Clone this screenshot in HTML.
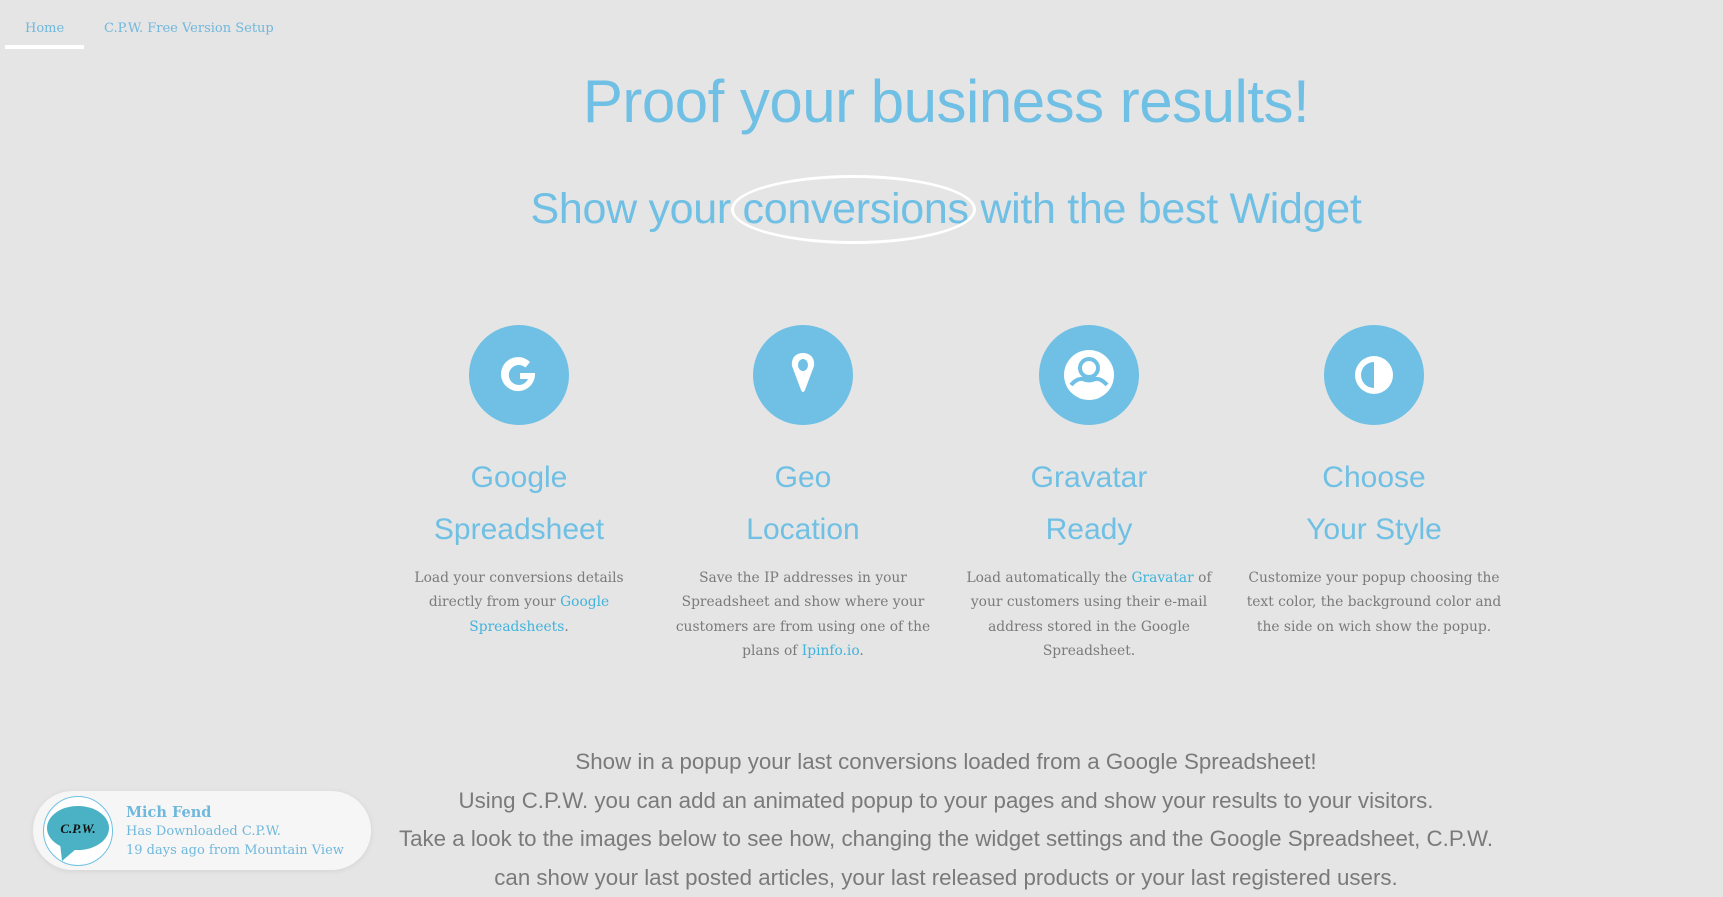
<!DOCTYPE html>
<html><head><meta charset="utf-8"><style>
*{margin:0;padding:0;box-sizing:border-box}
body{width:1723px;height:886px;overflow:hidden;background:#e5e5e5;position:relative;font-family:"Liberation Sans",sans-serif}
.nav{position:absolute;top:21px;font-family:"DejaVu Serif",serif;font-size:13px;color:#6fb8dd}
.ul{position:absolute;left:5px;top:45px;width:79px;height:4px;background:#fff}
h1{position:absolute;top:67px;left:0;width:1892px;text-align:center;font-weight:300;font-size:60px;color:#6fc0e4;white-space:nowrap;letter-spacing:-0.5px}
h2{position:absolute;top:185px;left:0;width:1892px;text-align:center;font-weight:300;font-size:43px;color:#6fc0e4;white-space:nowrap;letter-spacing:-0.3px}
.ell{position:absolute;left:731px;top:175px;width:245px;height:69px;border:3px solid #fff;border-radius:50%}
.col{position:absolute;top:325px;width:280px;text-align:center}
.ci{width:100px;height:100px;border-radius:50%;background:#6fc0e4;margin:0 auto;display:flex;align-items:center;justify-content:center}
.col h3{font-weight:400;font-size:30px;line-height:52px;color:#6fc0e4;margin-top:27px}
.col p{font-family:"DejaVu Serif",serif;font-size:13.8px;line-height:24.3px;color:#7a7a7a;margin-top:10px}
.col a{color:#3fb3dc;text-decoration:none}
.bot{position:absolute;top:743px;left:0;width:1892px;text-align:center;font-size:22.3px;line-height:38.5px;color:#7a7a7a;font-weight:300}
.pop{position:absolute;left:33px;top:791px;width:338px;height:79px;border-radius:40px;background:#f6f6f6;box-shadow:0 1px 6px rgba(0,0,0,.08)}
.av{position:absolute;left:43px;top:796px;width:70px;height:70px;border-radius:50%;border:1px solid #6fc0e4;background:#fff}
.pt{position:absolute;left:126px;font-family:"DejaVu Serif",serif;color:#6fb8dd;font-size:13px;white-space:nowrap}
</style></head><body>
<div class="nav" style="left:25px">Home</div>
<div class="nav" style="left:104px">C.P.W. Free Version Setup</div>
<div class="ul"></div>
<h1>Proof your business results!</h1>
<h2>Show your conversions with the best Widget</h2>
<div class="ell"></div>

<div class="col" style="left:379px">
<div class="ci"><svg width="44" height="44" viewBox="0 0 44 44"><path d="M33 9 A17 17 0 1 0 38 22 L38 20 L23 20 L23 26 L31 26 A10 10 0 1 1 28.5 14.5 Z" fill="#fff"/></svg></div>
<h3>Google<br>Spreadsheet</h3>
<p>Load your conversions details<br>directly from your <a>Google<br>Spreadsheets</a>.</p></div>

<div class="col" style="left:663px">
<div class="ci"><svg width="30" height="48" viewBox="0 0 30 48"><path d="M15 2 C7 2 3 8 4 15 L13 39 Q15 43 17 39 L26 15 C27 8 23 2 15 2 Z" fill="#fff"/><ellipse cx="15" cy="14" rx="5" ry="6" fill="#6fc0e4"/></svg></div>
<h3>Geo<br>Location</h3>
<p>Save the IP addresses in your<br>Spreadsheet and show where your<br>customers are from using one of the<br>plans of <a>Ipinfo.io</a>.</p></div>

<div class="col" style="left:949px">
<div class="ci"><svg width="52" height="52" viewBox="0 0 52 52"><circle cx="26" cy="26" r="25" fill="#fff"/><circle cx="26" cy="19" r="9" fill="none" stroke="#6fc0e4" stroke-width="4"/><path d="M8 36 Q14 29 20 30 Q26 33 32 30 Q38 29 44 36" fill="none" stroke="#6fc0e4" stroke-width="4"/></svg></div>
<h3>Gravatar<br>Ready</h3>
<p>Load automatically the <a>Gravatar</a> of<br>your customers using their e-mail<br>address stored in the Google<br>Spreadsheet.</p></div>

<div class="col" style="left:1234px">
<div class="ci"><svg width="44" height="44" viewBox="0 0 44 44"><circle cx="22" cy="22" r="19" fill="#fff"/><path d="M22 9 A13 13 0 0 0 22 35 Z" fill="#6fc0e4"/></svg></div>
<h3>Choose<br>Your Style</h3>
<p>Customize your popup choosing the<br>text color, the background color and<br>the side on wich show the popup.</p></div>

<div class="bot">Show in a popup your last conversions loaded from a Google Spreadsheet!<br>Using C.P.W. you can add an animated popup to your pages and show your results to your visitors.<br>Take a look to the images below to see how, changing the widget settings and the Google Spreadsheet, C.P.W.<br>can show your last posted articles, your last released products or your last registered users.</div>

<div class="pop"></div>
<div class="av"><svg width="68" height="68" viewBox="0 0 68 68"><ellipse cx="34" cy="31" rx="31" ry="22" fill="#4ab2c4"/><path d="M16 46 L18 64 L32 52 Z" fill="#4ab2c4"/><text x="34" y="36" text-anchor="middle" font-family="Liberation Serif,serif" font-style="italic" font-weight="bold" font-size="13" fill="#111">C.P.W.</text></svg></div>
<div class="pt" style="top:804px;font-weight:bold;font-size:14.5px">Mich Fend</div>
<div class="pt" style="top:824px">Has Downloaded C.P.W.</div>
<div class="pt" style="top:843px">19 days ago from Mountain View</div>
</body></html>
